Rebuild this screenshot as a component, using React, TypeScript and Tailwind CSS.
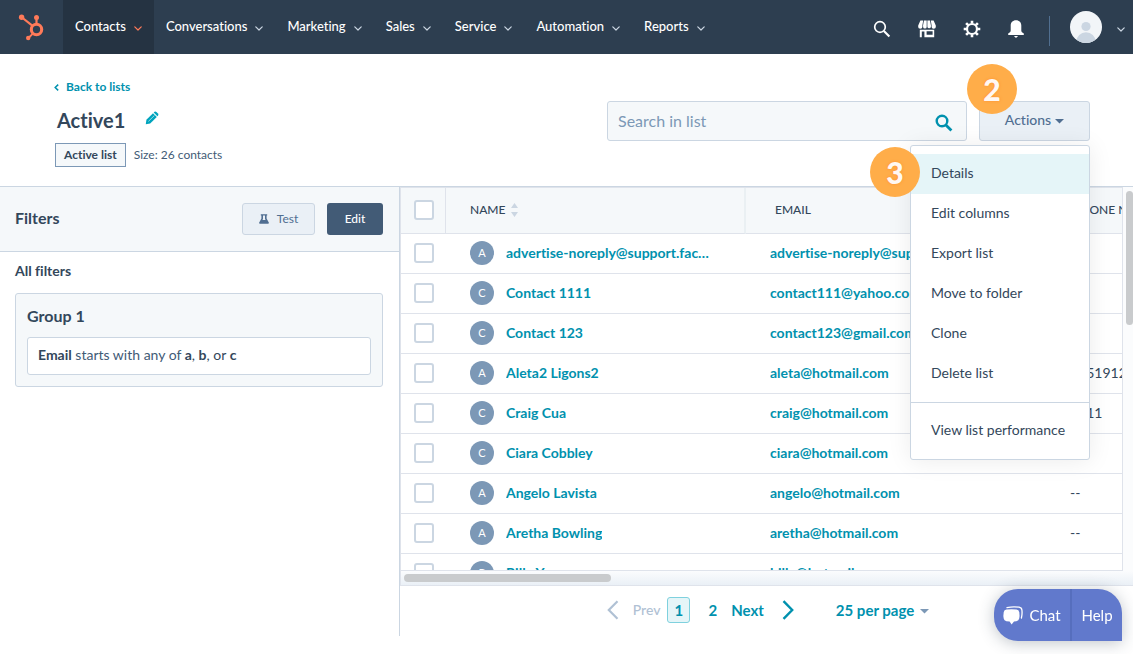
import React from "react";

const navItems = ["Contacts", "Conversations", "Marketing", "Sales", "Service", "Automation", "Reports"];

const contacts = [
  { name: "advertise-noreply@support.facebook.com", email: "advertise-noreply@support.facebook.com", phone: "" },
  { name: "Contact 1111", email: "contact111@yahoo.com", phone: "" },
  { name: "Contact 123", email: "contact123@gmail.com", phone: "" },
  { name: "Aleta2 Ligons2", email: "aleta@hotmail.com", phone: "+151912345" },
  { name: "Craig Cua", email: "craig@hotmail.com", phone: "1111" },
  { name: "Ciara Cobbley", email: "ciara@hotmail.com", phone: "" },
  { name: "Angelo Lavista", email: "angelo@hotmail.com", phone: "--" },
  { name: "Aretha Bowling", email: "aretha@hotmail.com", phone: "--" },
  { name: "Billy Young", email: "billy@hotmail.com", phone: "" },
];

const menuItems = ["Details", "Edit columns", "Export list", "Move to folder", "Clone", "Delete list"];

function Chevron({ className }: { className: string }) {
  return (
    <svg width="8" height="5" viewBox="0 0 8 5" className={className} fill="none" stroke="currentColor" strokeWidth="1.2" strokeLinecap="round" strokeLinejoin="round" aria-hidden="true">
      <path d="M0.8 0.9 L4 4 L7.2 0.9" />
    </svg>
  );
}

function Caret({ className }: { className: string }) {
  return (
    <svg width="9" height="5" viewBox="0 0 9 5" className={className} fill="currentColor" aria-hidden="true">
      <path d="M0 0 H9 L4.5 4.6 Z" />
    </svg>
  );
}

function Logo() {
  return (
    <svg width="26" height="28" viewBox="0 0 26 28" stroke="#ff7a59" fill="none" aria-hidden="true">
      <circle cx="18.5" cy="16.5" r="5.2" strokeWidth="3.1" />
      <path d="M18.5 11 V5" strokeWidth="2.2" />
      <path d="M14.6 12.8 L4 4.5" strokeWidth="2.2" />
      <path d="M14.8 20.6 L10.5 25" strokeWidth="1.9" />
      <circle cx="18.5" cy="4.6" r="2.5" fill="#ff7a59" stroke="none" />
      <circle cx="3.6" cy="4.2" r="2.7" fill="#ff7a59" stroke="none" />
      <circle cx="10.2" cy="25" r="2.2" fill="#ff7a59" stroke="none" />
    </svg>
  );
}

function SearchIcon({ weight, className }: { weight: number; className: string }) {
  return (
    <svg width="18" height="18" viewBox="0 0 18 18" className={className} fill="none" stroke="currentColor" strokeWidth={weight} aria-hidden="true">
      <circle cx="7" cy="7" r="5.3" />
      <path d="M10.9 10.9 L16.4 16.4" strokeWidth={weight + 0.4} />
    </svg>
  );
}

function StoreIcon() {
  return (
    <svg width="18" height="18" viewBox="0 0 18 18" fill="#fff" aria-hidden="true">
      <path d="M2.4 0.5 H5.2 L4.4 5.2 V7 a1.9 1.6 0 0 1 -4.2 0 V5.6 Z" />
      <path d="M6 0.5 H8.7 V7 a1.8 1.6 0 0 1 -3.6 0 V5.2 Z" />
      <path d="M9.4 0.5 H12 L12.9 5.2 V7 a1.8 1.6 0 0 1 -3.5 0 Z" />
      <path d="M12.8 0.5 H15.6 L17.8 5.6 V7 a1.9 1.6 0 0 1 -4.2 0 V5.2 Z" />
      <path fillRule="evenodd" d="M1.8 9.8 H16.2 V17.2 H1.8 Z M3.8 11.5 V17.2 H6.4 V11.5 Z M8.6 11.3 V14.8 H14.6 V11.3 Z" />
    </svg>
  );
}

function GearIcon() {
  return (
    <svg width="18" height="18" viewBox="0 0 18 18" fill="none" stroke="#fff" aria-hidden="true">
      <circle cx="9" cy="9" r="5" strokeWidth="2.2" />
      <g strokeWidth="2.6">
        <path d="M9 0.7 V3.6 M9 14.4 V17.3 M0.7 9 H3.6 M14.4 9 H17.3" />
        <path d="M3.1 3.1 L5.2 5.2 M12.8 12.8 L14.9 14.9 M3.1 14.9 L5.2 12.8 M12.8 5.2 L14.9 3.1" />
      </g>
    </svg>
  );
}

function BellIcon() {
  return (
    <svg width="16" height="18" viewBox="0 0 16 18" fill="#fff" aria-hidden="true">
      <path d="M8 0.2 C4.6 0.2 2.7 2.6 2.7 5.6 V10.6 C2.7 11.9 1.7 12.7 0.2 13.6 V15 H15.8 V13.6 C14.3 12.7 13.3 11.9 13.3 10.6 V5.6 C13.3 2.6 11.4 0.2 8 0.2 Z" />
      <path d="M5.9 16 H10.1 L8 18 Z" />
    </svg>
  );
}

function AvatarIcon() {
  return (
    <svg width="32" height="32" viewBox="0 0 32 32" aria-hidden="true">
      <defs>
        <clipPath id="avatar">
          <circle cx="16" cy="16" r="16" />
        </clipPath>
      </defs>
      <g clipPath="url(#avatar)">
        <rect width="32" height="32" fill="#f2f5f8" />
        <circle cx="16" cy="15.5" r="4.6" fill="#cbd6e2" />
        <ellipse cx="16" cy="30.5" rx="9.6" ry="9.3" fill="#cbd6e2" />
      </g>
    </svg>
  );
}

function PencilIcon() {
  return (
    <svg width="14" height="14" viewBox="0 0 14 14" fill="#00a4bd" aria-hidden="true">
      <path d="M0.8 13.2 L1.4 8.7 L8 2.2 L11.8 6 L5.2 12.4 Z" />
      <path d="M8.7 1.6 L9.5 0.8 Q10.4 0.1 11.4 0.9 L13 2.5 Q13.8 3.5 13.1 4.5 L12.4 5.3 Z" />
      <path d="M3.4 10.4 L9.4 4.5" stroke="#fff" strokeWidth="0.6" />
    </svg>
  );
}

function FlaskIcon() {
  return (
    <svg width="10" height="10" viewBox="0 0 10 10" fill="#506e91" aria-hidden="true">
      <path fillRule="evenodd" d="M1.8 0.2 H8.2 V1.6 H7.6 V4.4 L9.8 8.4 Q10.2 9.8 9 9.8 H1 Q-0.2 9.8 0.2 8.4 L2.4 4.4 V1.6 H1.8 Z M4 1.6 V4.8 L3.5 6 H6.5 L6 4.8 V1.6 Z" />
    </svg>
  );
}

function ChatIcon() {
  return (
    <svg width="20" height="19" viewBox="0 0 20 19" aria-hidden="true">
      <path d="M4 1.6 Q10 0.2 16 1.2 Q18.6 1.6 18.9 4 Q19.4 8 18.4 12" fill="none" stroke="#fff" strokeWidth="1.3" strokeLinecap="round" />
      <path d="M3.4 3.6 Q8.6 2.7 13.4 3.6 Q15.9 4 16.3 6.2 Q16.8 9.5 16.2 12.6 Q15.8 14.8 13.4 15.2 L11 15.5 L8.6 18.4 L6.6 15.5 L3.4 15.2 Q1.1 14.8 0.7 12.6 Q0.1 9.5 0.7 6.2 Q1.1 4 3.4 3.6 Z" fill="#fff" />
    </svg>
  );
}

function StepBadge({ children, className }: { children: string; className: string }) {
  return (
    <span className={`absolute flex size-[50px] items-center justify-center rounded-full bg-[#ffad49] text-[30px] font-black text-[#fff8f3] [text-shadow:0_0_3px_#ff8f2e] ${className}`}>
      {children}
    </span>
  );
}

function Checkbox({ label }: { label: string }) {
  return (
    <input
      type="checkbox"
      aria-label={label}
      className="block size-5 appearance-none rounded-[3px] border-2 border-[#cbd6e2] bg-white"
    />
  );
}

function TopBar() {
  return (
    <header className="flex h-[54px] shrink-0 items-center bg-[#2d3e50] text-white">
      <a href="#home" aria-label="Home" className="w-[63px] shrink-0 pl-[18px]">
        <Logo />
      </a>
      <nav className="flex h-full flex-1">
        {navItems.map((item, i) => (
          <a
            key={item}
            href={`#${item.toLowerCase()}`}
            className={`flex items-center gap-2 px-3 text-[13px] font-medium ${i === 0 ? "bg-[#253342]" : ""}`}
          >
            {item}
            <Chevron className={i === 0 ? "mt-0.5 text-[#ff7a59]" : "mt-0.5 text-[#cbd6e2]"} />
          </a>
        ))}
      </nav>
      <div className="flex items-center">
        <div className="flex items-center gap-[27px] pt-1 pr-[25px]">
          <button aria-label="Search"><SearchIcon weight={1.7} className="text-white" /></button>
          <button aria-label="Marketplace"><StoreIcon /></button>
          <button aria-label="Settings"><GearIcon /></button>
          <button aria-label="Notifications"><BellIcon /></button>
        </div>
        <button aria-label="Account" className="flex items-center pr-2">
          <span className="mt-2 mr-5 h-[30px] w-px bg-[#516f90]" />
          <AvatarIcon />
          <Chevron className="mt-1 ml-[15px] text-[#cbd6e2]" />
        </button>
      </div>
    </header>
  );
}

function ActionsMenu() {
  return (
    <div className="relative">
      <button className="flex h-10 w-[111px] items-center justify-center gap-1 rounded-[3px] border border-[#cbd6e2] bg-[#eaf0f6] pb-0.5 text-sm font-medium text-[#506e91]">
        Actions
        <Caret className="mt-0.5" />
      </button>
      <div className="absolute top-full right-0 z-10 mt-1 w-[180px] rounded-[3px] border border-[#cbd6e2] bg-white py-2 text-sm text-[#33475b] shadow-[0_1px_24px_rgba(0,0,0,0.08)]">
        {menuItems.map((item, i) => (
          <button key={item} className={`flex h-10 w-full items-center px-5 pb-0.5 ${i === 0 ? "bg-[#e5f5f8]" : ""}`}>
            {item}
          </button>
        ))}
        <div className="mt-2 border-t border-[#cbd6e2] pt-2">
          <button className="flex h-10 w-full items-center px-5 pb-0.5 whitespace-nowrap">View list performance</button>
        </div>
        <StepBadge className="top-px -left-[41px]">3</StepBadge>
      </div>
      <StepBadge className="-top-[37px] -left-3 z-10">2</StepBadge>
    </div>
  );
}

function PageHeader() {
  return (
    <section className="flex h-[133px] shrink-0 justify-between border-b border-[#cbd6e2] pr-[43px] pl-[54px]">
      <div className="pt-6">
        <a href="#lists" className="flex items-center gap-[7px] text-xs leading-[18px] font-bold text-[#0091ae]">
          <svg width="5" height="7" viewBox="0 0 5 7" fill="none" stroke="currentColor" strokeWidth="1.5" aria-hidden="true">
            <path d="M4.2 0.6 L1.2 3.5 L4.2 6.4" />
          </svg>
          Back to lists
        </a>
        <div className="mt-2.5 flex h-7 items-center gap-5 pl-[3px]">
          <h1 className="text-xl font-bold text-[#33475b]">Active1</h1>
          <button aria-label="Rename list" className="pb-1"><PencilIcon /></button>
        </div>
        <div className="mt-[9px] flex items-center gap-2 pl-px text-xs text-[#33475b]">
          <span className="flex h-6 items-center border border-[#7c98b6] bg-[#f5f8fa] px-2 font-bold">Active list</span>
          <span className="text-[#425b76]">Size: 26 contacts</span>
        </div>
      </div>
      <div className="flex items-start gap-3 pt-[47px]">
        <div className="relative">
          <input
            type="search"
            aria-label="Search in list"
            placeholder="Search in list"
            className="h-10 w-[360px] rounded-[3px] border border-[#cbd6e2] bg-[#f5f8fa] pr-10 pb-0.5 pl-2.5 text-base text-[#33475b] placeholder:text-[#7c98b6]"
          />
          <SearchIcon weight={2.4} className="absolute top-[13px] right-3.5 text-[#0091ae]" />
        </div>
        <ActionsMenu />
      </div>
    </section>
  );
}

function FiltersPanel() {
  return (
    <aside className="mb-[18px] w-[400px] shrink-0 border-r border-[#cbd6e2] text-[#33475b]">
      <div className="flex h-[65px] items-center justify-between border-b border-[#cbd6e2] bg-[#f5f8fa] pr-4 pl-[15px]">
        <h2 className="pb-0.5 text-base font-bold">Filters</h2>
        <div className="flex gap-3">
          <button className="flex h-8 w-[73px] items-center justify-center gap-2 rounded-[3px] border border-[#cbd6e2] bg-[#eaf0f6] text-xs text-[#506e91]">
            <FlaskIcon />
            Test
          </button>
          <button className="h-8 w-14 rounded-[3px] bg-[#425b76] text-xs font-medium text-white">Edit</button>
        </div>
      </div>
      <div className="pt-[9px] pr-4 pl-[15px]">
        <h3 className="text-sm font-bold">All filters</h3>
        <div className="mt-3 rounded-[3px] border border-[#cbd6e2] bg-[#f5f8fa] p-[11px] pt-[9px]">
          <h4 className="text-base leading-[26px] font-bold">Group 1</h4>
          <p className="mt-2 rounded-[3px] border border-[#cbd6e2] bg-white px-2.5 pt-[7px] pb-[9px] text-sm">
            <b>Email</b> <span className="text-[#425b76]">starts with any of</span> <b>a</b>, <b>b</b>, or <b>c</b>
          </p>
        </div>
      </div>
    </aside>
  );
}

function ContactsTable() {
  return (
    <div className="relative flex min-h-0 flex-1 flex-col border-b border-l border-[#dfe3eb] bg-[linear-gradient(to_bottom,#fbfcfd_calc(100%-14px),#eaf0f6)] pr-2.5 pb-3.5">
      <div className="min-h-0 flex-1 overflow-hidden border-t border-r border-b border-[#dfe3eb] bg-white">
        <table className="w-[900px] table-fixed border-separate border-spacing-0 text-left">
          <colgroup>
            <col className="w-[45px]" />
            <col className="w-[300px]" />
            <col className="w-[300px]" />
            <col />
          </colgroup>
          <thead>
            <tr className="h-[46px] bg-[#f5f8fa] text-xs text-[#33475b]">
              <th className="border-r border-b border-[#dfe3eb] pt-0 pr-0 pb-0.5 pl-[13px]"><Checkbox label="Select all contacts" /></th>
              <th className="border-r-2 border-b border-r-[#eaf0f3] border-b-[#dfe3eb] pt-0 pr-0 pb-0.5 pl-6 font-medium">
                <button className="flex items-center gap-1.5">
                  NAME
                  <svg width="7" height="14" viewBox="0 0 7 14" fill="#cbd6e2" aria-hidden="true">
                    <path d="M3.5 0 L7 5 H0 Z M0 9 H7 L3.5 14 Z" />
                  </svg>
                </button>
              </th>
              <th className="border-r-2 border-b border-r-[#eaf0f3] border-b-[#dfe3eb] pt-0 pr-0 pb-0.5 pl-[29px] font-medium">EMAIL</th>
              <th className="border-b border-[#dfe3eb] pt-0 pr-0 pb-0.5 pl-[27px] font-medium">PHONE NUMBER</th>
            </tr>
          </thead>
          <tbody>
            {contacts.map((c) => (
              <tr key={c.email} className="h-10 text-sm">
                <td className="border-b border-[#dfe3eb] pt-0 pr-0 pb-0.5 pl-[13px]"><Checkbox label={`Select ${c.name}`} /></td>
                <td className="border-b border-[#dfe3eb] pt-0 pr-8 pb-0.5 pl-6">
                  <div className="flex items-center gap-3">
                    <span className="flex size-6 shrink-0 items-center justify-center rounded-full bg-[#7c98b6] text-[11px] text-white">
                      {c.name[0].toUpperCase()}
                    </span>
                    <a href="#contact" className="truncate font-bold text-[#0091ae]">{c.name}</a>
                  </div>
                </td>
                <td className="border-b border-[#dfe3eb] pt-0 pr-8 pb-0.5 pl-6">
                  <a href="#email" className="block truncate font-bold text-[#0091ae]">{c.email}</a>
                </td>
                <td className="border-b border-[#dfe3eb] pt-0 pb-0.5 pl-6 text-[#33475b]">{c.phone}</td>
              </tr>
            ))}
          </tbody>
        </table>
      </div>
      <div className="absolute top-1 right-0 h-[134px] w-[7px] rounded-full bg-[#c9cbcd]" />
      <div className="absolute bottom-[3px] left-[3px] h-2 w-[207px] rounded-full bg-[#c9cbcd]" />
    </div>
  );
}

function Pagination() {
  return (
    <nav aria-label="Pagination" className="flex h-[68px] shrink-0 items-start justify-center pt-[11px] pl-[3px] text-[15px] font-bold text-[#0091ae]">
      <button disabled className="flex h-[26px] items-center gap-3.5 text-[#b0c1d4]">
        <svg width="12" height="20" viewBox="0 0 12 20" fill="none" stroke="currentColor" strokeWidth="2.2" aria-hidden="true">
          <path d="M10.5 1.2 L1.8 10 L10.5 18.8" />
        </svg>
        <span className="text-sm font-medium">Prev</span>
      </button>
      <button className="ml-[7px] h-[26px] w-[23px] rounded-[3px] border border-[#7fd1de] bg-[#e5f5f8]">1</button>
      <button className="ml-[18px] h-[26px]">2</button>
      <button className="ml-3.5 flex h-[26px] items-center gap-[18px]">
        Next
        <svg width="12" height="20" viewBox="0 0 12 20" fill="none" stroke="currentColor" strokeWidth="2.4" aria-hidden="true">
          <path d="M1.5 1.2 L10.2 10 L1.5 18.8" />
        </svg>
      </button>
      <button className="ml-[42px] flex h-[26px] items-center gap-1.5">
        25 per page
        <Caret className="mt-0.5 text-[#7c98b6]" />
      </button>
    </nav>
  );
}

function HelpWidget() {
  return (
    <div className="fixed right-[11px] bottom-[13px] flex h-[52px] rounded-3xl rounded-br-none bg-[#6179cc] text-[15px] text-white shadow-[0_2px_16px_rgba(45,62,80,0.3)]">
      <button className="flex w-[78px] items-center justify-center gap-1.5 border-r-2 border-[#566ebd]">
        <ChatIcon />
        Chat
      </button>
      <button className="w-[50px]">Help</button>
    </div>
  );
}

export default function App() {
  return (
    <div className="flex h-screen flex-col bg-white font-['Lato',sans-serif] [font-variant-ligatures:none]">
      <TopBar />
      <PageHeader />
      <main className="flex min-h-0 flex-1">
        <FiltersPanel />
        <section className="flex min-w-0 flex-1 flex-col">
          <ContactsTable />
          <Pagination />
        </section>
      </main>
      <HelpWidget />
    </div>
  );
}
